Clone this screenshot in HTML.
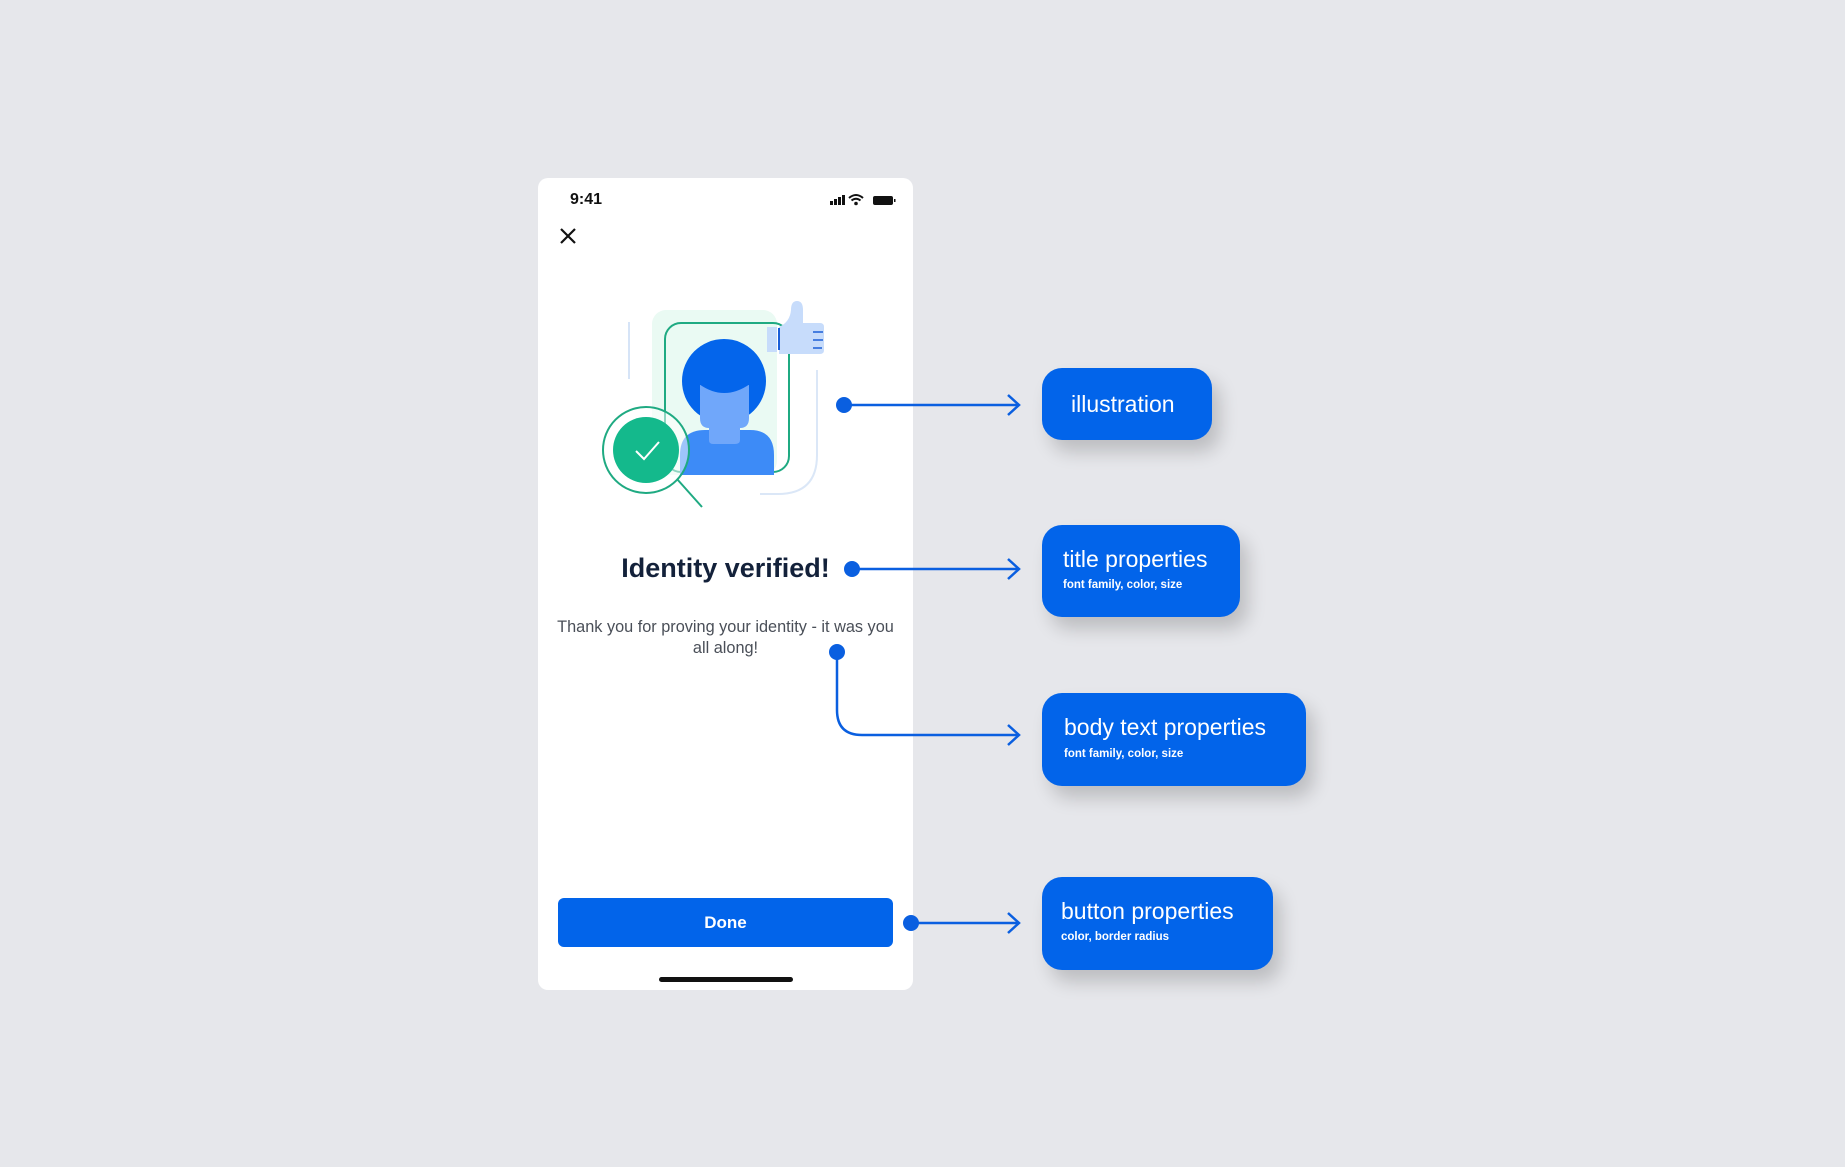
<!DOCTYPE html>
<html><head><meta charset="utf-8"><style>
body{margin:0;width:1845px;height:1167px;background:#e6e7eb;position:relative;overflow:hidden;font-family:"Liberation Sans",sans-serif}
.phone{position:absolute;left:538px;top:178px;width:375px;height:812px;background:#fff;border-radius:10px}
.box{position:absolute;background:#0264ea;border-radius:20px;color:#fff;box-shadow:8px 12px 18px rgba(0,0,0,0.18)}
.box .t{position:absolute;font-size:23px;white-space:nowrap}
.box .s{position:absolute;font-size:11.5px;font-weight:bold;white-space:nowrap}
.abs{position:absolute}
</style></head><body>
<div class="phone"></div>
<div class="abs" style="left:570px;top:191px;font-size:16px;font-weight:bold;color:#111">9:41</div>
<svg class="abs" style="left:828px;top:192px" width="70" height="16" viewBox="0 0 70 16">
<rect x="2" y="9" width="3" height="4" fill="#111"/><rect x="6" y="7" width="3" height="6" fill="#111"/><rect x="10" y="5" width="3" height="8" fill="#111"/><rect x="14" y="3" width="3" height="10" fill="#111"/>
<path d="M21 6 Q28 0 35 6 M23.5 8.5 Q28 5 32.5 8.5" stroke="#111" stroke-width="2" fill="none"/><circle cx="28" cy="11.5" r="1.8" fill="#111"/>
<rect x="45" y="4" width="20" height="9" rx="2" fill="#111"/><rect x="66" y="7" width="1.5" height="3" fill="#111"/>
</svg>
<svg class="abs" style="left:559px;top:227px" width="18" height="18"><path d="M2 2 L16 16 M16 2 L2 16" stroke="#111" stroke-width="2.2"/></svg>
<svg class="abs" style="left:0;top:0" width="1845" height="1167">
<line x1="629" y1="322" x2="629" y2="379" stroke="#d6e4f7" stroke-width="2"/>
<rect x="652" y="310" width="125" height="165" rx="14" fill="#eafaf3"/>
<path d="M817 370 V455 Q817 494 778 494 H760" stroke="#dbe7f7" stroke-width="2" fill="none"/>
<rect x="665" y="323" width="124" height="149" rx="16" fill="none" stroke="#1faa82" stroke-width="2"/>
<path d="M680 475 V455 Q680 430 705 430 H750 Q774 430 774 455 V475 Z" fill="#3d8bf7"/>
<circle cx="724" cy="381" r="42" fill="#0465eb"/>
<path d="M700 385 H749 V418 Q749 428 740 428 V440 Q740 444 735 444 H713 Q709 444 709 440 V428 Q700 428 700 418 Z" fill="#70a7fa"/>
<path d="M699 370 H750 V384 Q724 402 699 384 Z" fill="#0465eb"/>
<line x1="677" y1="479" x2="702" y2="507" stroke="#1faa82" stroke-width="2"/>
<circle cx="646" cy="450" r="43" fill="rgba(255,255,255,0.5)" stroke="#1faa82" stroke-width="2"/>
<circle cx="646" cy="450" r="33" fill="#14b98c"/>
<path d="M636 451 L644 459 L659 442" stroke="#fff" stroke-width="2" fill="none"/>
<path d="M767 327 H777 V352 H767 Z" fill="#c7dcfb"/>
<path d="M779 327 Q790 322 791 310 Q791 301 797 301 Q803 301 803 310 V323 H820 Q824 323 824 327 V350 Q824 354 820 354 H779 Z" fill="#c7dcfb"/>
<line x1="779" y1="328" x2="779" y2="350" stroke="#1b5ed8" stroke-width="2"/>
<path d="M813 332 H823 M813 340 H823 M813 348 H822" stroke="#1b5ed8" stroke-width="1.5"/>
<g stroke="#0a5fe0" stroke-width="2.5" fill="none">
<line x1="844" y1="405" x2="1018" y2="405"/><path d="M1008 395 L1019 405 L1008 415"/>
<line x1="852" y1="569" x2="1018" y2="569"/><path d="M1008 559 L1019 569 L1008 579"/>
<path d="M837 652 V710 Q837 735 862 735 H1018"/><path d="M1008 725 L1019 735 L1008 745"/>
<line x1="911" y1="923" x2="1018" y2="923"/><path d="M1008 913 L1019 923 L1008 933"/>
</g>
<g fill="#0a5fe0"><circle cx="844" cy="405" r="8"/><circle cx="852" cy="569" r="8"/><circle cx="837" cy="652" r="8"/><circle cx="911" cy="923" r="8"/></g>
</svg>
<div class="abs" style="left:538px;width:375px;top:553px;text-align:center;font-size:27px;font-weight:bold;color:#13213a">Identity verified!</div>
<div class="abs" style="left:538px;width:375px;top:617px;text-align:center;font-size:16.3px;line-height:21px;color:#4a4f58">Thank you for proving your identity - it was you<br>all along!</div>
<div class="abs" style="left:558px;top:898px;width:335px;height:49px;background:#0264ea;border-radius:6px;color:#fff;font-size:17px;font-weight:bold;text-align:center;line-height:49px">Done</div>
<div class="abs" style="left:659px;top:977px;width:134px;height:5px;border-radius:3px;background:#111"></div>
<div class="box" style="left:1042px;top:368px;width:170px;height:72px"><div class="t" style="left:29px;top:23px">illustration</div></div>
<div class="box" style="left:1042px;top:525px;width:198px;height:92px"><div class="t" style="left:21px;top:21px">title properties</div><div class="s" style="left:21px;top:54px">font family, color, size</div></div>
<div class="box" style="left:1042px;top:693px;width:264px;height:93px"><div class="t" style="left:22px;top:21px">body text properties</div><div class="s" style="left:22px;top:55px">font family, color, size</div></div>
<div class="box" style="left:1042px;top:877px;width:231px;height:93px"><div class="t" style="left:19px;top:21px">button properties</div><div class="s" style="left:19px;top:54px">color, border radius</div></div>
</body></html>
